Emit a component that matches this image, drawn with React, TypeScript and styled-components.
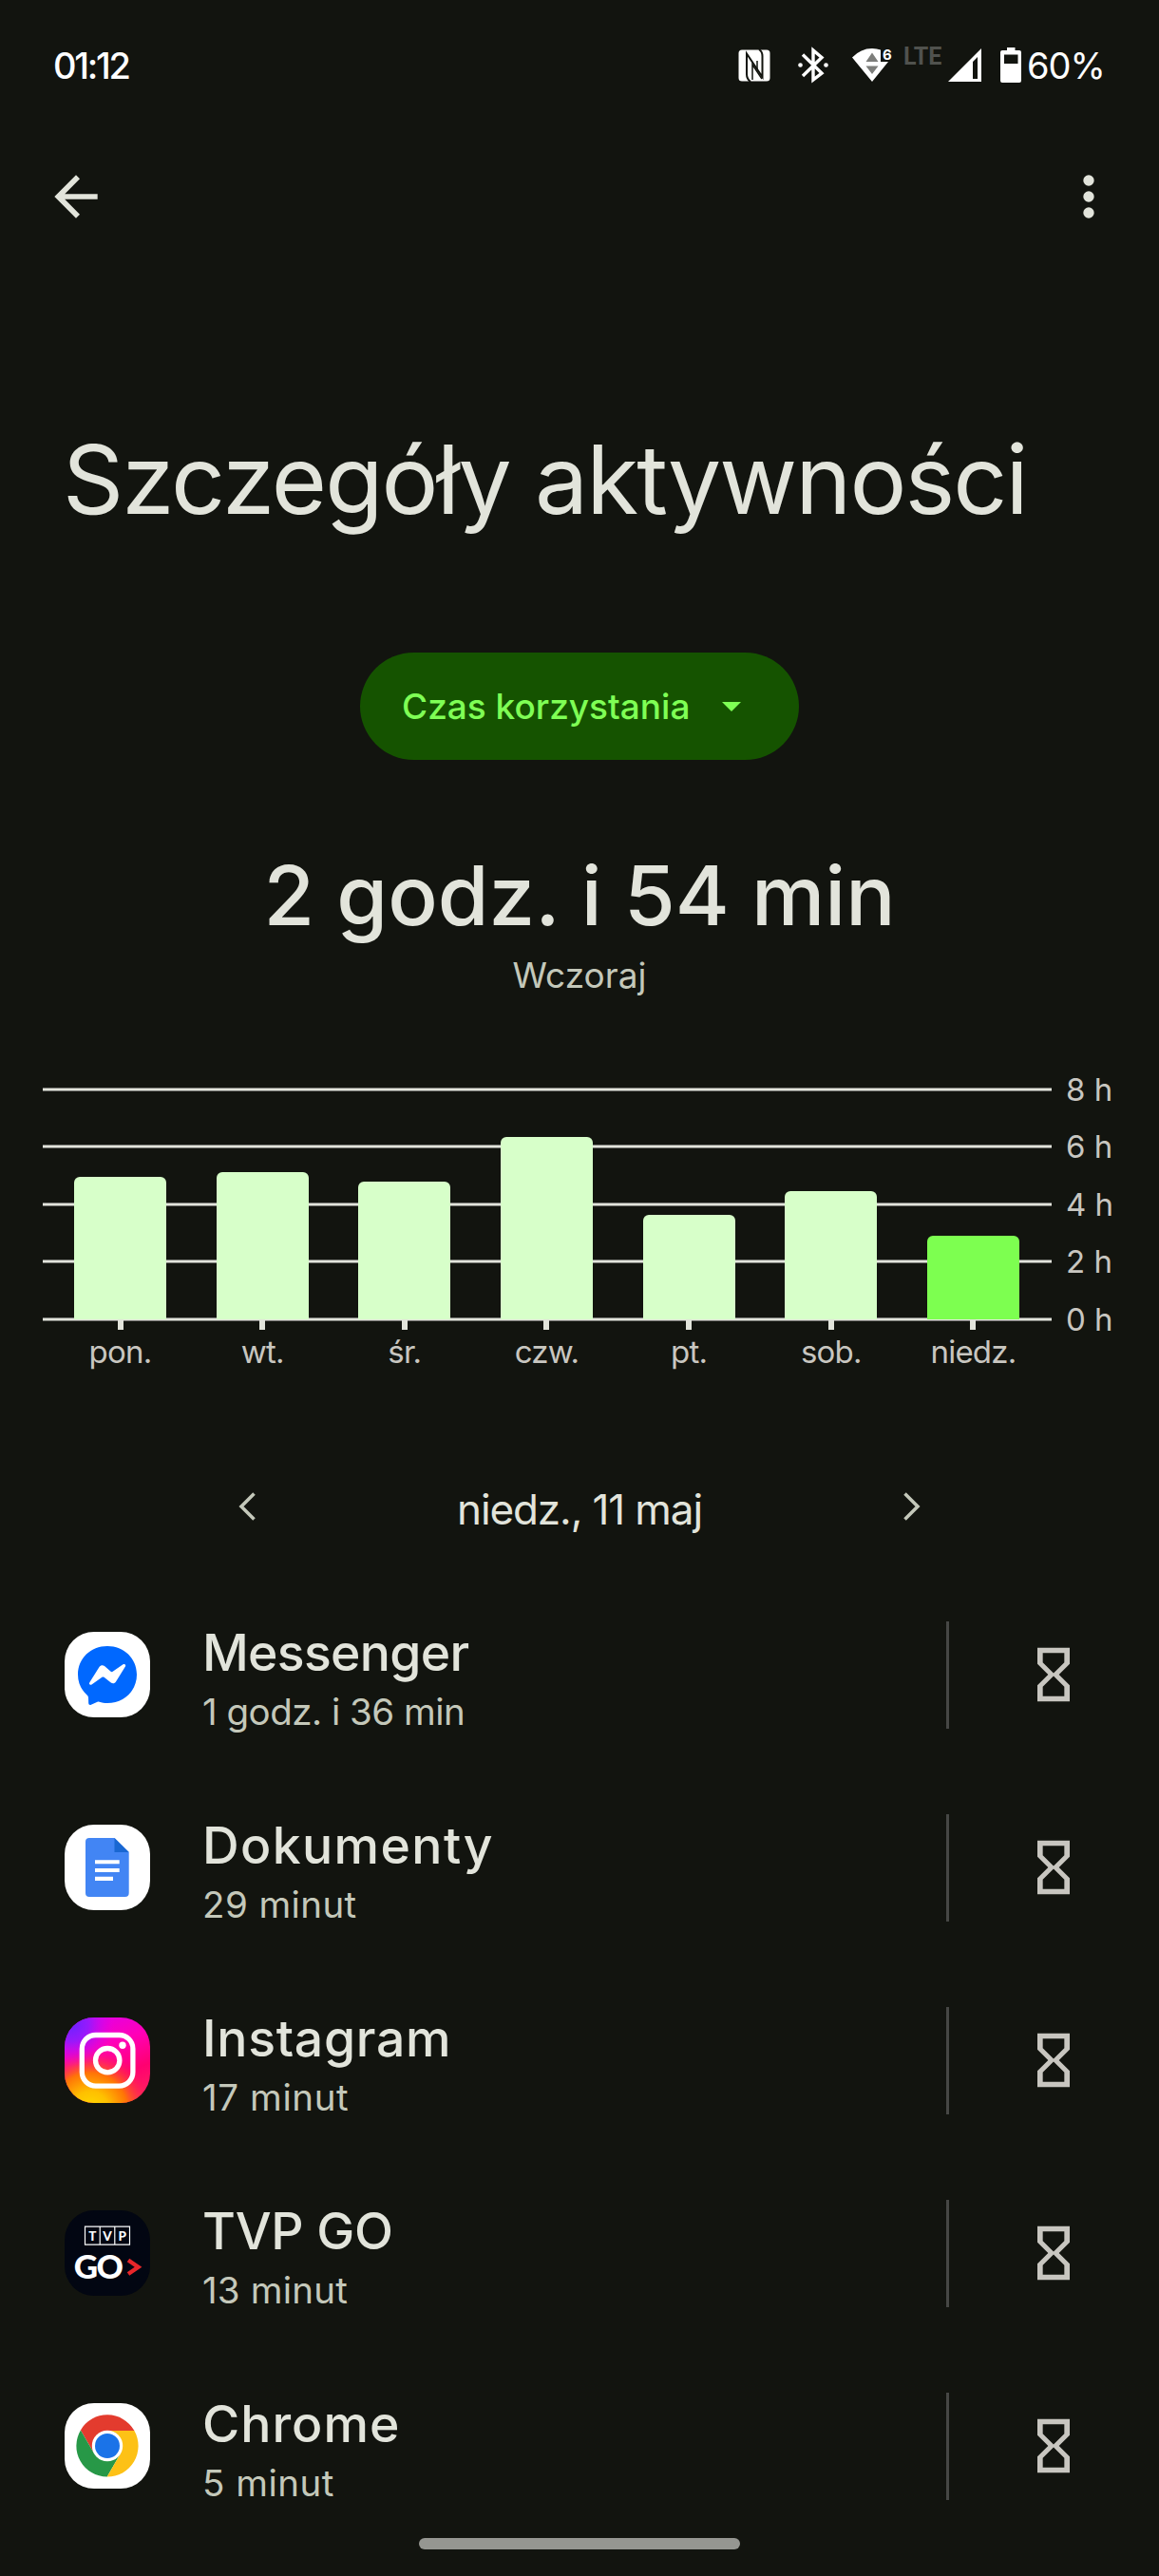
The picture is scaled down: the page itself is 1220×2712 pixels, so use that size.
import React from 'react'
import styled, { createGlobalStyle } from 'styled-components'

const colors = {
  bg: '#12140f',
  text1: '#e2e4db',
  text2: '#c4c8ba',
  label: '#c8c6c0',
  primary: '#7fff55',
  primaryContainer: '#155300',
  bar: '#d7ffc9',
  barActive: '#7dff50',
  divider: '#464745'
}

const GlobalStyle = createGlobalStyle`
  * {
    box-sizing: border-box;
  }

  body {
    margin: 0;
    background: ${colors.bg};
    font-family: Inter, 'Noto Sans', sans-serif;
    color: ${colors.text1};
  }
`

const Screen = styled.div`
  position: relative;
  display: flex;
  flex-direction: column;
  width: 1220px;
  height: 2712px;
  overflow: hidden;
  background: ${colors.bg};
`

const StatusBar = styled.div`
  display: flex;
  align-items: center;
  justify-content: space-between;
  height: 137px;
  padding: 0 58px 0 56px;
  color: #fff;
`

const Clock = styled.span`
  font-size: 38px;
  font-weight: 500;
  letter-spacing: -2.3px;
`

const StatusIcons = styled.div`
  display: flex;
  align-items: center;
`

const StatusIcon = styled.svg<{ gap: number }>`
  display: block;
  flex-shrink: 0;
  height: 37px;
  margin-right: ${({ gap }) => gap}px;
  overflow: visible;
`

const Network = styled.span`
  align-self: flex-start;
  width: 40px;
  margin-right: 7px;
  color: #50524e;
  font-family: Roboto, sans-serif;
  font-size: 25px;
  font-weight: 700;
  line-height: 28px;
`

const Battery = styled.span`
  width: 81px;
  font-size: 38px;
  line-height: 46px;
  letter-spacing: -1px;
  white-space: nowrap;
`

const AppBar = styled.div`
  display: flex;
  align-items: center;
  justify-content: space-between;
  height: 140px;
  padding: 0 40px 0 46px;
`

const IconButton = styled.button`
  display: flex;
  padding: 0;
  border: 0;
  background: none;
  color: ${colors.text1};
`

const Title = styled.h1`
  margin: 168px 0 0 66px;
  font-size: 100px;
  font-weight: 400;
  line-height: 120px;
  letter-spacing: -1.9px;
  white-space: nowrap;
`

const Dropdown = styled.button`
  display: flex;
  align-items: center;
  align-self: center;
  justify-content: space-between;
  width: 462px;
  height: 113px;
  margin-top: 122px;
  padding: 0 61px 0 44px;
  border: 0;
  border-radius: 57px;
  background: ${colors.primaryContainer};
  color: ${colors.primary};
  font-family: inherit;
  font-size: 37px;
  font-weight: 450;
  letter-spacing: 0;
`

const Caret = styled.span`
  border-top: 10px solid ${colors.primary};
  border-right: 10px solid transparent;
  border-left: 10px solid transparent;
`

const Total = styled.div`
  margin-top: 91px;
  font-size: 87px;
  font-weight: 450;
  line-height: 104px;
  text-align: center;
`

const TotalCaption = styled.div`
  margin-top: 8px;
  color: ${colors.text2};
  font-size: 37px;
  line-height: 48px;
  text-align: center;
`

const Chart = styled.div`
  display: grid;
  grid-template-columns: 1062px 1fr;
  column-gap: 15px;
  height: 298px;
  margin: 94px 0 0 45px;
`

const Lines = styled.div`
  display: grid;
  grid-area: 1 / 1;
  grid-template-rows: 60px 61px 60px 61px 4px;
  align-self: start;
`

const Line = styled.div`
  height: 4px;
  border: 1px solid #7b7c78;
  border-width: 1px 0;
  background: ${colors.text1};
`

const Days = styled.div`
  display: flex;
  grid-area: 1 / 1;
  justify-content: space-between;
  padding: 0 34px 0 33px;
`

const Day = styled.div`
  display: flex;
  flex-direction: column;
  align-items: center;
  width: 97px;
`

const BarTrack = styled.div`
  display: flex;
  align-items: flex-end;
  width: 100%;
  height: 244px;
`

const Bar = styled.div<{ active?: boolean }>`
  width: 100%;
  border-radius: 6px 6px 0 0;
  background: ${({ active }) => (active ? colors.barActive : colors.bar)};
`

const Tick = styled.div`
  width: 6px;
  height: 10px;
  margin-top: 1px;
  background: ${colors.text1};
`

const DayLabel = styled.span`
  margin-top: 3px;
  color: ${colors.label};
  font-size: 33px;
  line-height: 40px;
  letter-spacing: -0.8px;
`

const Hours = styled.div`
  display: grid;
  grid-template-rows: 60px 61px 60px 61px 40px;
  margin-top: -18px;
  color: ${colors.label};
  font-size: 33px;
  line-height: 40px;
`

const DateNav = styled.div`
  display: flex;
  align-items: center;
  align-self: center;
  justify-content: space-between;
  width: 760px;
  height: 100px;
  margin-top: 96px;
`

const DateButton = styled(IconButton)`
  justify-content: center;
  width: 60px;
  padding-bottom: 6px;
  color: ${colors.text2};
`

const DateText = styled.span`
  font-size: 44px;
  letter-spacing: -1.1px;
`

const AppList = styled.div`
  display: flex;
  flex-direction: column;
  margin-top: 23px;
`

const AppRow = styled.div`
  display: flex;
  flex-shrink: 0;
  align-items: center;
  height: 203px;
  padding: 0 77px 0 68px;
`

const AppIcon = styled.svg`
  display: block;
  flex-shrink: 0;
  width: 90px;
  height: 90px;
  margin-bottom: 1px;
  border-radius: 31px;
`

const AppText = styled.div`
  display: flex;
  flex: 1;
  flex-direction: column;
  margin: 4px 0 0 55px;
`

const AppName = styled.span<{ tracking: number }>`
  font-size: 53.5px;
  font-weight: 450;
  line-height: 72px;
  letter-spacing: ${({ tracking }) => tracking}px;
`

const AppTime = styled.span<{ tracking: number }>`
  color: ${colors.text2};
  font-size: 38.5px;
  line-height: 52px;
  letter-spacing: ${({ tracking }) => tracking}px;
`

const Divider = styled.div`
  width: 3px;
  height: 113px;
  margin-right: 76px;
  background: ${colors.divider};
`

const TimerButton = styled(IconButton)`
  margin-bottom: 2px;
  color: ${colors.label};
`

const HomeBar = styled.div`
  position: absolute;
  bottom: 28px;
  left: 441px;
  width: 338px;
  height: 12px;
  border-radius: 6px;
  background: #959691;
`

function NfcIcon() {
  return (
    <StatusIcon gap={29} width="34" viewBox="0 0 34 37">
      <rect x="0.5" y="2.5" width="33" height="33" rx="3.5" fill="#fff" />
      <g fill="none" stroke={colors.bg} strokeWidth="2">
        <path d="M13 36C9.500 33.500 9 31.500 9 28V6.500L25.500 31V9C25.500 6 25 4 22 2" />
        <path d="M15 34V18L25 33M20 23V14" strokeWidth="1.500" />
      </g>
    </StatusIcon>
  )
}

function BluetoothIcon() {
  return (
    <StatusIcon gap={25} width="32" viewBox="0 0 32 37">
      <path d="M5 7.500L25 27L16 34V3L25 10.500L5 30" fill="none" stroke="#fff" strokeWidth="3.400" />
      <circle cx="2.500" cy="18.500" r="2.300" fill="#fff" />
      <circle cx="29.500" cy="18.500" r="2.300" fill="#fff" />
    </StatusIcon>
  )
}

function WifiIcon() {
  return (
    <StatusIcon gap={13} width="41" viewBox="0 0 41 37">
      <path d="M21 36L0 10.500Q9 1 21 1Q26 1 30 2.500V15H38Z" fill="#fff" />
      <path d="M21 5.500L27.500 15H14.500ZM14.500 19.500H27.500L21 28Z" fill="#7d7e7b" />
      <text x="32" y="12.500" fill="#fff" fontFamily="Inter, sans-serif" fontSize="15" fontWeight="700">
        6
      </text>
    </StatusIcon>
  )
}

function SignalIcon() {
  return (
    <StatusIcon gap={20} width="35" viewBox="0 0 35 37">
      <path fillRule="evenodd" d="M0 36L35 1V36ZM26 15V33H31V10Z" fill="#fff" />
    </StatusIcon>
  )
}

function BatteryIcon() {
  return (
    <StatusIcon gap={6} width="22" viewBox="0 0 22 37">
      <path
        fillRule="evenodd"
        d="M7 0H15.500V3H20Q22 3 22 5V35Q22 37 20 37H2Q0 37 0 35V5Q0 3 2 3H7ZM4 7.500V17H18.500V7.500Z"
        fill="#fff"
      />
    </StatusIcon>
  )
}

function Hourglass() {
  return (
    <svg width="68" height="68" viewBox="0 0 24 24" fill="currentColor">
      <path d="M6 2v6l4 4-4 4v6h12v-6l-4-4 4-4V2H6zm10 14.500V20H8v-3.500l4-4 4 4zm-4-5l-4-4V4h8v3.500l-4 4z" />
    </svg>
  )
}

function MessengerIcon() {
  return (
    <AppIcon viewBox="0 0 90 90">
      <rect width="90" height="90" fill="#fff" />
      <path
        d="M45 15C27.500 15 14 27.800 14 45C14 54 17.800 61.500 23.800 66.700C24.500 67.400 24.900 68 25 69L25.200 75C25.200 76.500 26.500 77.300 27.800 76.700L34.500 73.800C35.200 73.500 35.900 73.500 36.500 73.700C39.200 74.500 42 75 45 75C62.500 75 76 62.200 76 45C76 27.800 62.500 15 45 15Z"
        fill="#0068ff"
      />
      <path
        d="M26.300 53.300L36.500 37C37.900 35 40.200 34.700 42 36L48.600 41.800C49.200 42.300 50 42.300 50.700 41.800L61.500 34.300C63.200 33.200 65 34.800 63.900 36.600L54 52.500C52.800 54.500 50.600 54.800 48.800 53.500L41.500 47.800C40.900 47.300 40 47.300 39.400 47.800L28.500 55.400C26.900 56.500 25.200 55 26.300 53.300Z"
        fill="#fff"
      />
    </AppIcon>
  )
}

function DocsIcon() {
  return (
    <AppIcon viewBox="0 0 90 90">
      <rect width="90" height="90" fill="#fff" />
      <path d="M26 14H52.500L67.700 29V72Q67.700 76 63.700 76H26Q22 76 22 72V18Q22 14 26 14Z" fill="#4285f4" />
      <path d="M52.500 14L67.700 29H52.500Z" fill="#1967d2" />
      <path d="M32 37.200H57.700V41.300H32ZM32 46H57.700V50.100H32ZM32 54.800H51V58.900H32Z" fill="#fff" />
    </AppIcon>
  )
}

function InstagramIcon() {
  return (
    <AppIcon viewBox="0 0 90 90">
      <defs>
        <linearGradient id="ig-base" x1="0.300" y1="0" x2="0.700" y2="1">
          <stop offset="0" stopColor="#e000e8" />
          <stop offset="0.350" stopColor="#ff00b8" />
          <stop offset="0.700" stopColor="#ff0070" />
          <stop offset="1" stopColor="#ff2060" />
        </linearGradient>
        <radialGradient id="ig-warm" cx="0.300" cy="1.080" r="0.720">
          <stop offset="0" stopColor="#ffdc00" />
          <stop offset="0.300" stopColor="#ffc000" />
          <stop offset="0.600" stopColor="#ff7a00" stopOpacity="0.950" />
          <stop offset="1" stopColor="#ff1060" stopOpacity="0" />
        </radialGradient>
        <radialGradient id="ig-violet" cx="0.080" cy="0.080" r="0.500">
          <stop offset="0" stopColor="#6a22ff" />
          <stop offset="0.400" stopColor="#8f1cff" stopOpacity="0.900" />
          <stop offset="1" stopColor="#e000f0" stopOpacity="0" />
        </radialGradient>
      </defs>
      <rect width="90" height="90" fill="url(#ig-base)" />
      <rect width="90" height="90" fill="url(#ig-warm)" />
      <rect width="90" height="90" fill="url(#ig-violet)" />
      <g fill="none" stroke="#fff" strokeWidth="5.300">
        <rect x="18.300" y="18.500" width="53.600" height="53.600" rx="14.500" />
        <circle cx="45.200" cy="45.200" r="12.700" />
      </g>
      <circle cx="61" cy="29.300" r="3.700" fill="#fff" />
    </AppIcon>
  )
}

function TvpIcon() {
  return (
    <AppIcon viewBox="0 0 90 90">
      <rect width="90" height="90" fill="#020612" />
      <path d="M21.500 17.200H68.500V36.200H21.500ZM37.200 17V36M52.800 17V36" fill="none" stroke="#fff" strokeWidth="1.200" />
      <g fill="#fff" fontFamily="Lato, sans-serif" textAnchor="middle">
        <g fontSize="13.500" fontWeight="900">
          <text x="29.300" y="31.600">
            T
          </text>
          <text x="45" y="31.600">
            V
          </text>
          <text x="60.800" y="31.600">
            P
          </text>
        </g>
        <g fontSize="35" fontWeight="900">
          <text x="22.500" y="72">
            G
          </text>
          <text x="47.800" y="72">
            O
          </text>
        </g>
      </g>
      <path d="M67 52.500L77.500 59.700L67 67" fill="none" stroke="#e8262a" strokeWidth="4.400" />
    </AppIcon>
  )
}

function ChromeIcon() {
  return (
    <AppIcon viewBox="0 0 90 90">
      <rect width="90" height="90" fill="#fff" />
      <path d="M16.900 28.400A32.600 32.600 0 0 1 73.400 29H45L31.100 53Z" fill="#e33b2e" />
      <path d="M16.900 28.400L31.100 53H58.900L44.700 77.600A32.600 32.600 0 0 1 16.900 28.400Z" fill="#279847" />
      <path d="M73.400 29H45L58.900 53L44.700 77.600A32.600 32.600 0 0 0 73.400 29Z" fill="#fdc116" />
      <circle cx="45" cy="45" r="16.200" fill="#fff" />
      <circle cx="45" cy="45" r="13" fill="#1a73e8" />
    </AppIcon>
  )
}

const week = [
  { label: 'pon.', height: 150 },
  { label: 'wt.', height: 155 },
  { label: 'śr.', height: 145 },
  { label: 'czw.', height: 192 },
  { label: 'pt.', height: 110 },
  { label: 'sob.', height: 135 },
  { label: 'niedz.', height: 88, active: true }
]

const hours = ['8 h', '6 h', '4 h', '2 h', '0 h']

const apps = [
  { name: 'Messenger', time: '1 godz. i 36 min', Icon: MessengerIcon, tracking: -0.7, timeTracking: -0.5 },
  { name: 'Dokumenty', time: '29 minut', Icon: DocsIcon, tracking: 1.4, timeTracking: 0.4 },
  { name: 'Instagram', time: '17 minut', Icon: InstagramIcon, tracking: 0.7, timeTracking: 0.6 },
  { name: 'TVP GO', time: '13 minut', Icon: TvpIcon, tracking: -0.3, timeTracking: 0.2 },
  { name: 'Chrome', time: '5 minut', Icon: ChromeIcon, tracking: 1, timeTracking: 0.5 }
]

export default function App() {
  return (
    <Screen>
      <GlobalStyle />
      <StatusBar>
        <Clock>01:12</Clock>
        <StatusIcons>
          <NfcIcon />
          <BluetoothIcon />
          <WifiIcon />
          <Network>LTE</Network>
          <SignalIcon />
          <BatteryIcon />
          <Battery>60%</Battery>
        </StatusIcons>
      </StatusBar>
      <AppBar>
        <IconButton aria-label="Wstecz">
          <svg width="68" height="68" viewBox="0 0 24 24" fill="currentColor">
            <path d="M20 11H7.830l5.590-5.590L12 4l-8 8 8 8 1.410-1.410L7.830 13H20v-2z" />
          </svg>
        </IconButton>
        <IconButton aria-label="Więcej opcji">
          <svg width="68" height="68" viewBox="0 0 24 24" fill="currentColor">
            <circle cx="12" cy="6" r="2" />
            <circle cx="12" cy="12" r="2" />
            <circle cx="12" cy="18" r="2" />
          </svg>
        </IconButton>
      </AppBar>
      <Title>Szczegóły aktywności</Title>
      <Dropdown>
        Czas korzystania
        <Caret />
      </Dropdown>
      <Total>2 godz. i 54 min</Total>
      <TotalCaption>Wczoraj</TotalCaption>
      <Chart>
        <Lines>
          {hours.map(hour => (
            <Line key={hour} />
          ))}
        </Lines>
        <Days>
          {week.map(({ label, height, active }) => (
            <Day key={label}>
              <BarTrack>
                <Bar active={active} style={{ height }} />
              </BarTrack>
              <Tick />
              <DayLabel>{label}</DayLabel>
            </Day>
          ))}
        </Days>
        <Hours>
          {hours.map(hour => (
            <span key={hour}>{hour}</span>
          ))}
        </Hours>
      </Chart>
      <DateNav>
        <DateButton aria-label="Poprzedni dzień">
          <svg width="60" height="60" viewBox="0 0 60 60" fill="none" stroke="currentColor" strokeWidth="3.600">
            <path d="M37.500 16.500L24 30L37.500 43.500" />
          </svg>
        </DateButton>
        <DateText>niedz., 11 maj</DateText>
        <DateButton aria-label="Następny dzień">
          <svg width="60" height="60" viewBox="0 0 60 60" fill="none" stroke="currentColor" strokeWidth="3.600">
            <path d="M22.500 16.500L36 30L22.500 43.500" />
          </svg>
        </DateButton>
      </DateNav>
      <AppList>
        {apps.map(({ name, time, Icon, tracking, timeTracking }) => (
          <AppRow key={name}>
            <Icon />
            <AppText>
              <AppName tracking={tracking}>{name}</AppName>
              <AppTime tracking={timeTracking}>{time}</AppTime>
            </AppText>
            <Divider />
            <TimerButton aria-label={`Limit czasu: ${name}`}>
              <Hourglass />
            </TimerButton>
          </AppRow>
        ))}
      </AppList>
      <HomeBar />
    </Screen>
  )
}
